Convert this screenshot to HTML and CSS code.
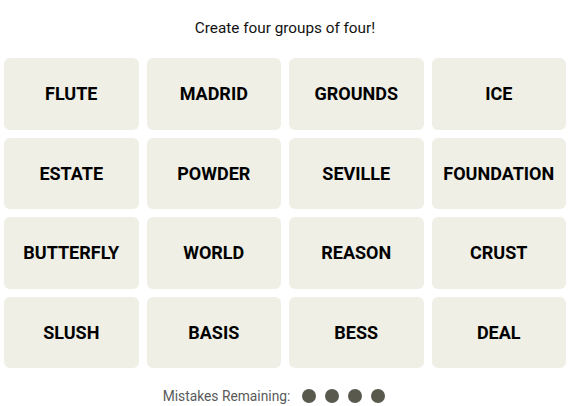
FILE: index.html
```html
<!DOCTYPE html>
<html lang="en">
<head>
<meta charset="utf-8">
<title>Connections</title>
<link rel="stylesheet" href="styles.css">
</head>
<body>
<main class="game">
  <p class="prompt">Create four groups of four!</p>
  <div class="board">
    <button class="tile">FLUTE</button>
    <button class="tile">MADRID</button>
    <button class="tile">GROUNDS</button>
    <button class="tile">ICE</button>
    <button class="tile">ESTATE</button>
    <button class="tile">POWDER</button>
    <button class="tile">SEVILLE</button>
    <button class="tile">FOUNDATION</button>
    <button class="tile">BUTTERFLY</button>
    <button class="tile">WORLD</button>
    <button class="tile">REASON</button>
    <button class="tile">CRUST</button>
    <button class="tile">SLUSH</button>
    <button class="tile">BASIS</button>
    <button class="tile">BESS</button>
    <button class="tile">DEAL</button>
  </div>
  <div class="mistakes">
    <span class="mistakes-label">Mistakes Remaining:</span>
    <span class="dots">
      <span class="dot"></span>
      <span class="dot"></span>
      <span class="dot"></span>
      <span class="dot"></span>
    </span>
  </div>
</main>
</body>
</html>
```
FILE: styles.css
```css
html, body {
  margin: 0;
  padding: 0;
  background: #ffffff;
}

body {
  font-family: Roboto, "Liberation Sans", sans-serif;
  color: #000000;
}

.game {
  padding: 18px 4px 0 4px;
  display: flex;
  flex-direction: column;
}

.prompt {
  margin: 0;
  font-size: 15.3px;
  line-height: 20px;
  text-align: center;
  font-weight: 400;
  color: #121212;
}

.board {
  margin-top: 20px;
  display: grid;
  grid-template-columns: repeat(4, 1fr);
  grid-auto-rows: 71.5px;
  gap: 8px;
}

.tile {
  border: none;
  margin: 0;
  padding: 0;
  background: #efefe6;
  border-radius: 6px;
  font-family: Roboto, "Liberation Sans", sans-serif;
  font-weight: 700;
  font-size: 18px;
  color: #000000;
  display: flex;
  align-items: center;
  justify-content: center;
}

.mistakes {
  margin-top: 18px;
  display: flex;
  align-items: center;
  justify-content: center;
  gap: 12px;
  padding-right: 22px;
  height: 20px;
}

.mistakes-label {
  font-size: 13.8px;
  line-height: 20px;
  color: #5a5a5a;
}

.dots {
  display: flex;
  gap: 9px;
}

.dot {
  width: 14px;
  height: 14px;
  border-radius: 50%;
  background: #5a594e;
}
```
